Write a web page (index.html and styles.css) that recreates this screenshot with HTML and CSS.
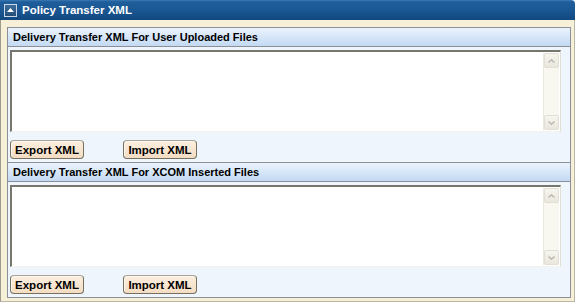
FILE: index.html
```html
<!DOCTYPE html>
<html lang="en">
<head>
  <meta charset="UTF-8">
  <title>Policy Transfer XML</title>
  <link rel="stylesheet" href="styles.css">
</head>
<body>
  <div class="panel">
    <div class="titlebar">
      <span class="collapse"><svg width="7" height="4" viewBox="0 0 7 4"><path d="M0 4 L3.5 0 L7 4 Z" fill="#fff"/></svg></span>
      <span class="title">Policy Transfer XML</span>
    </div>
    <div class="panel-body">
      <div class="section">
        <div class="section-header">Delivery Transfer XML For User Uploaded Files</div>
        <div class="section-body">
          <div class="textbox">
            <div class="text-area"></div>
            <div class="scrollbar">
              <span class="arrow"><svg width="7" height="4" viewBox="0 0 7 4"><path d="M0.5 3.5 L3.5 0.8 L6.5 3.5" fill="none" stroke="#b8b8b0" stroke-width="1.4"/></svg></span>
              <span class="track"></span>
              <span class="arrow"><svg width="7" height="4" viewBox="0 0 7 4"><path d="M0.5 0.5 L3.5 3.2 L6.5 0.5" fill="none" stroke="#b8b8b0" stroke-width="1.4"/></svg></span>
            </div>
          </div>
          <div class="buttons">
            <button class="btn">Export XML</button>
            <button class="btn">Import XML</button>
          </div>
        </div>
      </div>
      <div class="section">
        <div class="section-header">Delivery Transfer XML For XCOM Inserted Files</div>
        <div class="section-body">
          <div class="textbox">
            <div class="text-area"></div>
            <div class="scrollbar">
              <span class="arrow"><svg width="7" height="4" viewBox="0 0 7 4"><path d="M0.5 3.5 L3.5 0.8 L6.5 3.5" fill="none" stroke="#b8b8b0" stroke-width="1.4"/></svg></span>
              <span class="track"></span>
              <span class="arrow"><svg width="7" height="4" viewBox="0 0 7 4"><path d="M0.5 0.5 L3.5 3.2 L6.5 0.5" fill="none" stroke="#b8b8b0" stroke-width="1.4"/></svg></span>
            </div>
          </div>
          <div class="buttons">
            <button class="btn">Export XML</button>
            <button class="btn">Import XML</button>
          </div>
        </div>
      </div>
    </div>
  </div>
</body>
</html>
```

FILE: styles.css
```css
body {
  margin: 0;
  background-color: #fff;
  font-family: "Liberation Sans", Arial, sans-serif;
}
.panel {
  width: 575px;
}
.titlebar {
  height: 20px;
  display: flex;
  align-items: center;
  background: linear-gradient(#3a78b4 0, #1f5e9b 2px, #1a5793 50%, #124880 100%);
  border-radius: 0 4px 0 0;
  color: #fff;
}
.collapse {
  width: 11px;
  height: 11px;
  margin-left: 4px;
  border: 1px solid #c9d8e8;
  background: linear-gradient(#3f6d9a, #254f7a);
  display: flex;
  justify-content: center;
  align-items: center;
}
.title {
  margin-left: 5px;
  font-size: 11.5px;
  font-weight: bold;
}
.panel-body {
  background-color: #f6f0d8;
  border-left: 1px solid #9d9a8c;
  border-right: 1px solid #b9b6a6;
  border-bottom: 1px solid #b9b6a6;
  padding: 7px 3px 3px 6px;
}
.section {
  border: 1px solid #8c9096;
}
.section + .section {
  border-top: none;
}
.section-header {
  height: 18px;
  line-height: 18px;
  padding-left: 5px;
  font-size: 11px;
  font-weight: bold;
  color: #000;
  background: linear-gradient(#ecf3fc, #d6e6f8 50%, #c3daf3);
  border-bottom: 1px solid #8c9096;
}
.section-body {
  background-color: #eef5fd;
  padding: 3px 9px 3px 2px;
}
.textbox {
  height: 82px;
  display: flex;
  background-color: #fff;
  border-top: 2px solid #77766c;
  border-left: 2px solid #77766c;
  border-right: 1px solid #e2e0d6;
  border-bottom: 1px solid #f4f2ea;
  box-sizing: border-box;
}
.text-area {
  flex: 1;
}
.scrollbar {
  width: 15px;
  margin: 1px 1px 1px 0;
  display: flex;
  flex-direction: column;
  background-color: #f8f7f0;
  border-left: 1px solid #eceae0;
}
.arrow {
  height: 13px;
  display: flex;
  justify-content: center;
  align-items: center;
  background: linear-gradient(#f6f5ee, #e9e7dd);
  border: 1px solid #e2e0d4;
  border-radius: 2px;
}
.track {
  flex: 1;
}
.buttons {
  display: flex;
  gap: 39px;
  margin-top: 8px;
}
.btn {
  height: 19px;
  width: 74px;
  padding: 0;
  font-family: "Liberation Sans", Arial, sans-serif;
  font-size: 11.5px;
  font-weight: bold;
  color: #000;
  background: linear-gradient(#fcefe0, #f3dcc2);
  border: 1px solid #75705f;
  border-top-color: #a9a498;
  border-radius: 4px;
  box-shadow: inset 1px 1px 0 #fff8ee;
}
```
